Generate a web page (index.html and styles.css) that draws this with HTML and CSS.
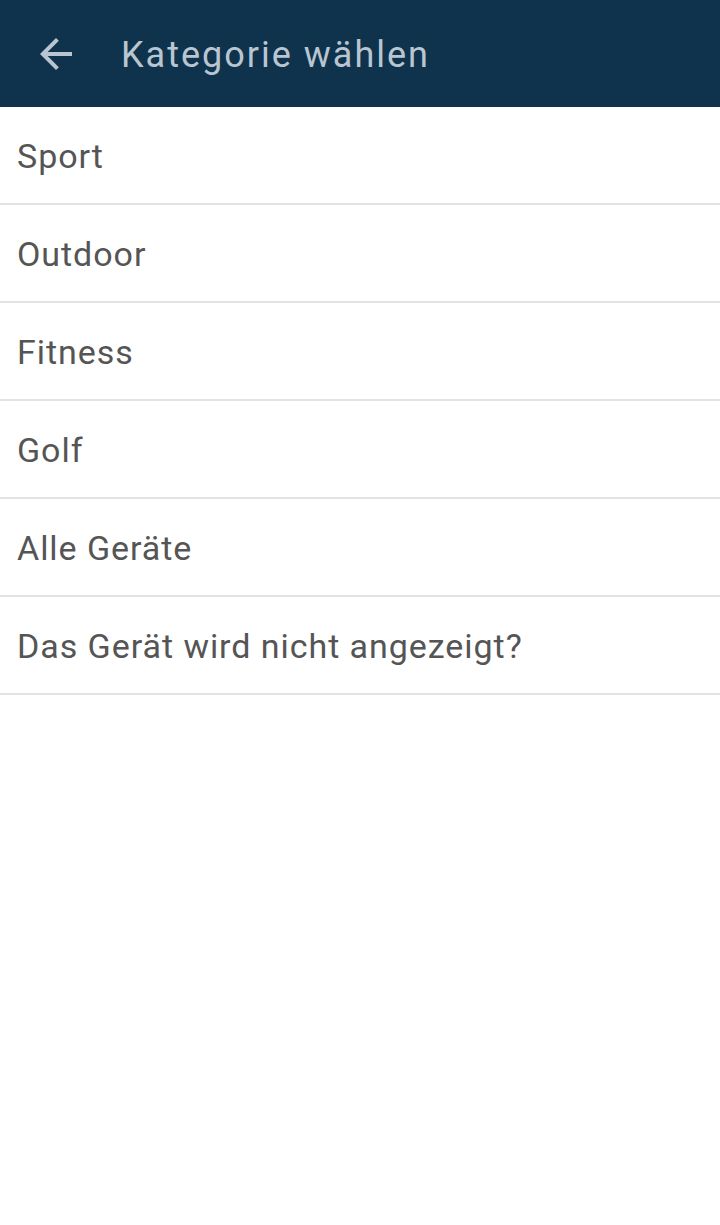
FILE: index.html
```html
<!DOCTYPE html>
<html lang="de">
<head>
<meta charset="utf-8">
<link rel="stylesheet" href="styles.css">
</head>
<body>
<header class="bar">
  <svg class="back" width="48" height="48" viewBox="0 0 24 24"><path d="M20 11H7.83l5.59-5.59L12 4l-8 8 8 8 1.41-1.41L7.83 13H20v-2z" fill="currentColor"/></svg>
  <h1 class="title">Kategorie wählen</h1>
</header>
<ul class="list">
  <li class="item">Sport</li>
  <li class="item">Outdoor</li>
  <li class="item">Fitness</li>
  <li class="item">Golf</li>
  <li class="item">Alle Geräte</li>
  <li class="item">Das Gerät wird nicht angezeigt?</li>
</ul>
</body>
</html>
```
FILE: styles.css
```css
html, body { margin: 0; padding: 0; background: #fff; }
body { font-family: Roboto, "Noto Sans", sans-serif; width: 720px; height: 1225px; }
.bar {
  height: 107px;
  background: #0f334d;
  color: #b9c6d1;
  display: flex;
  align-items: center;
}
.back { margin-left: 32px; flex: none; }
.title {
  margin: 0 0 0 41px;
  font-size: 36px;
  font-weight: 400;
  letter-spacing: 2px;
  padding-top: 2px;
}
.list { list-style: none; margin: 0; padding: 0; }
.item {
  height: 96px;
  border-bottom: 2px solid #e2e2e2;
  display: flex;
  align-items: center;
  padding-left: 17px;
  padding-top: 2px;
  box-sizing: border-box;
  height: 98px;
  font-size: 34px;
  letter-spacing: 0.95px;
  color: #555;
}
```
